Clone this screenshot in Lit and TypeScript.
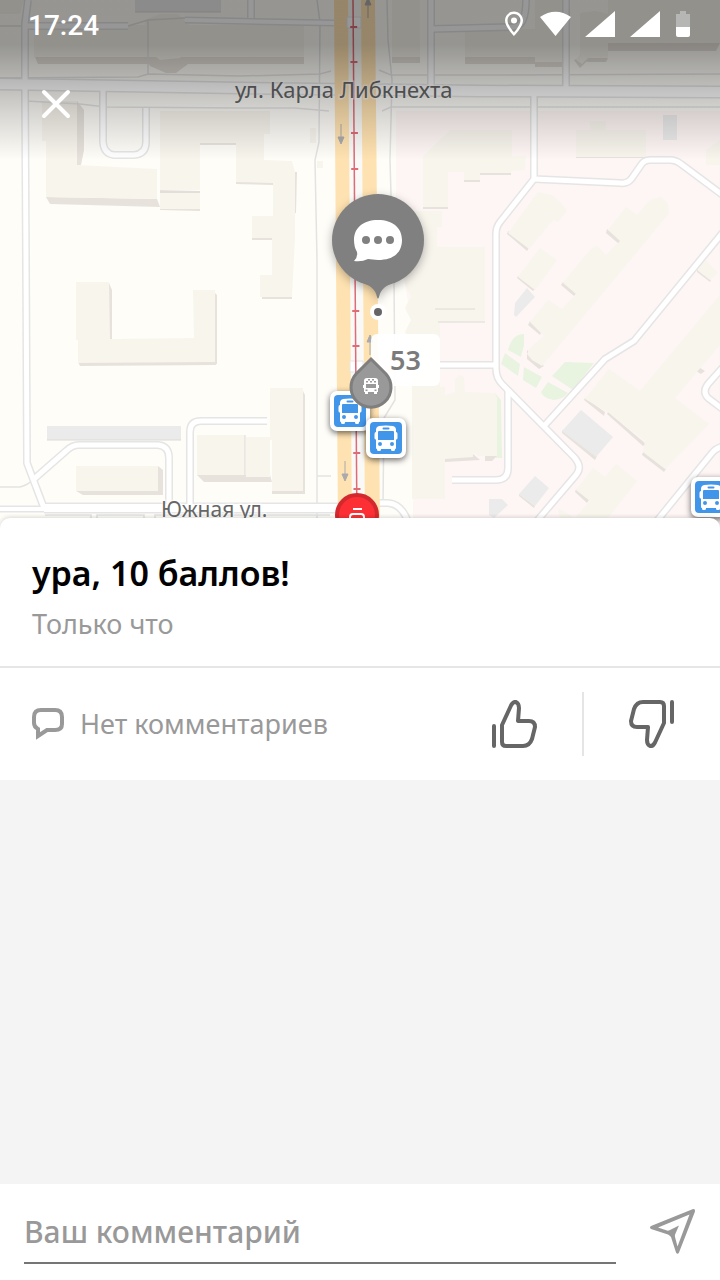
import { LitElement, html, svg, css } from "lit";
import { customElement, state } from "lit/decorators.js";

const ROADS: Array<[string, number]> = [
  ["M0 84 L240 88 L480 91 L720 92", 10],
  ["M28 0 L25 24 L25 84", 5],
  ["M25 88 L26 260 L27 463 L44 508", 5],
  ["M25 26 H128", 5],
  ["M185 20 L334 23", 4],
  ["M251 0 V18", 5],
  ["M431 0 V88", 5],
  ["M431 29 L514 27 Q526 26 526 0", 5],
  ["M566 0 V90", 5],
  ["M103 90 V142 Q104 154 114 155 H134 Q146 154 146 142 V108", 5],
  ["M34 479 L66 451 Q72 445 79 445 H158 Q169 446 169 458 V506", 5],
  ["M190 506 V432 Q190 421 201 421 H267", 5],
  ["M0 509 H44", 4],
  ["M44 508 H340", 8],
  ["M534 94 V179", 5],
  ["M534 179 L620 183 Q628 184 632 178 L641 165 Q644 160 650 160 H670 Q676 160 681 164 L724 196", 5],
  ["M534 179 L500 222 Q496 227 496 234 V368 Q496 378 502 384 L574 457 Q583 467 576 475 L536 522", 5],
  ["M440 365 H496", 5],
  ["M508 390 V468 Q508 480 496 480 H452", 5],
  ["M545 425 L605 359 L634 341 L724 231", 5],
  ["M724 366 L708 384 Q702 392 708 398 L724 410", 5],
  ["M656 522 L712 453 Q716 448 724 446", 5],
  ["M376 503 H388 Q402 504 408 522", 5],
];

const FOOTPATHS = [
  "M26 101 L80 104 L106 107 L240 108 H295 L329 111",
  "M0 78 L138 77 L148 74 L240 76 L320 74 L331 71",
  "M379 70 L391 75 H480 L720 74",
  "M382 111 L391 107 H720",
  "M0 26 H25", "M128 26 L148 20 V75 M148 20 L185 18",
  "M317 0 L320 22 L319 142 L315 160 L317 260 V518",
  "M387 0 L388 40 L392 80 L390 160 L391 195 L394 280 L395 400 L384 418 L383 502",
  "M317 476 H331", "M0 487 H20 Q28 485 34 479",
  "M45 515 H91 V520 M97 520 V515 H144 V520 M155 520 V515 H330",
];

const SHADES = [
  "35,57 304,57 304,64 38,64", "190,26 193,32 192,48 190,55", "142,50 190,50 188,64 176,73 166,73 150,66",
  "392,57 420,57 420,63 392,63", "465,57 535,57 535,64 465,64", "535,60 565,60 565,67 535,67",
  "574,60 584,56 588,60 580,68", "580,58 608,58 606,62 588,62", "608,43 720,43 716,51 608,51",
  "46,197 157,199 160,207 50,204", "77,101 84,110 84,150 81,165 76,165",
  "160,190 200,191 200,211 160,210", "200,142 236,142 236,145 200,145", "236,181 273,182 273,185 236,184",
  "252,237 272,237 272,240 252,240", "262,296 292,296 292,299 262,299", "293,172 297,172 296,213 293,213",
  "109,283 112,290 112,340 109,340", "213,291 217,295 217,364 213,364", "78,362 217,361 216,365 80,366",
  "76,491 158,491 158,466 163,470 163,495 83,495", "197,475 270,475 272,482 204,482", "272,490 305,490 305,494 272,494", "302,389 305,395 305,493 302,493",
  "423,206 448,206 448,209 423,209", "464,180 480,180 480,182 464,182", "480,173 511,173 511,175 480,175",
  "576,156 646,156 646,158 576,158", "508,231 529,248 527,251 507,234", "607,229 622,240 619,244 606,233",
  "563,282 577,293 574,296 561,285", "530,321 542,331 540,335 528,325", "527,350 544,366 539,369 527,359",
  "518,276 535,289 533,291 517,278", "445,457 473,457 473,454 480,460 445,462", "485,456 497,456 492,461 485,461",
  "640,391 661,406 658,410 638,394", "697,366 705,371 701,374 694,370", "585,398 605,412 604,416 584,400",
  "608,412 646,444 643,446 607,414", "643,452 666,469 664,472 642,455", "576,489 589,500 587,503 575,492",
  "562,430 597,456 595,460 562,433", "519,494 535,506 534,508 519,496", "697,269 711,280 710,282 697,272",
];

const BUILDINGS = [
  "34,25 304,25 304,57 34,57", "145,20 160,14 178,14 190,26 190,48 180,58 160,60 145,48",
  "0,0 24,0 20,14 0,14", "392,0 420,0 420,57 392,57", "465,29 535,29 535,57 465,57", "535,0 565,0 565,62 535,62",
  "580,13 595,11 608,14 608,58 588,58 582,64 576,60 580,54", "608,0 720,0 720,43 608,43",
  "42,101 77,101 77,165 157,169 157,199 46,197 46,141 42,141",
  "160,111 270,111 270,134 264,134 264,160 292,161 295,172 295,238 292,297 260,297 260,275 272,275 272,238 252,238 252,216 273,216 273,183 236,182 236,143 200,143 200,190 160,190",
  "160,193 200,193 200,209 160,209",
  "310,128 316,128 316,143 310,143", "317,161 323,161 323,168 317,168",
  "76,282 109,282 110,339 194,338 193,290 215,290 215,362 78,363 78,340 76,340",
  "76,466 158,466 158,491 76,491", "197,435 245,435 245,475 197,475", "246,437 270,437 270,477 246,477",
  "270,388 303,388 303,491 272,491 272,440 270,440",
  "423,156 450,130 512,130 512,156 526,156 525,170 511,171 511,173 480,173 480,180 464,180 464,172 448,172 448,207 423,207",
  "576,130 590,130 590,121 606,121 606,130 646,130 646,157 576,157", "706,150 720,140 720,165 706,165",
  "538,192 552,195 560,202 567,211 558,222 553,220 529,249 508,233",
  "626,207 637,215 650,200 660,197 668,203 669,213 632,258 542,366 532,360 527,354 530,348 544,336 530,322 548,300 562,309 576,294 563,283 580,262 593,247 597,246 606,255 620,241 608,230",
  "540,248 557,260 535,290 518,277",
  "412,211 442,211 442,227 437,227 437,247 485,247 485,321 440,323 440,387 445,387 445,499 412,499 412,340 405,332 411,320 405,308 411,296 405,284",
  "445,395 455,392 455,380 459,375 464,377 465,392 495,393 497,398 497,456 479,456 473,452 473,457 445,459",
  "609,369 640,391 720,295 720,345 702,366 675,398 709,424 665,469 643,452 645,441 608,412 585,399",
  "593,468 605,477 616,464 637,481 608,518 560,520 558,508 575,518 590,501 576,490",
  "706,260 718,273 710,280 697,270",
];

const GREY_BLOCKS = [
  "135,0 221,0 221,12 135,12", "47,426 181,426 181,440 47,440", "663,115 677,115 677,140 663,140",
  "527,288 535,297 516,317 514,315 515,303", "581,410 613,437 596,457 562,431",
  "535,476 549,488 535,506 519,494", "489,499 502,499 508,505 494,518 489,515",
];

const TICKS = [27, 62, 133, 169, 205, 311, 346, 453, 489];

const busStop = (x: number, y: number) => svg`
  <g transform="translate(${x} ${y})">
    <rect class="stop-plate" width="40" height="40" rx="7" />
    <rect x="4" y="4" width="32" height="32" rx="4" fill="#4296e9" />
    <path fill="#fff" fill-rule="evenodd" d="M13 8 Q20 7 27 8 Q29.500 8.500 30 11 V14 Q31.500 14 31.500 16 V20 Q31.500 21.500 30 21.500 V30 Q30 31 29 31 V31.500 Q29 33 27.500 33 H26.500 Q25 33 25 31.500 V31 H15 V31.500 Q15 33 13.500 33 H12.500 Q11 33 11 31.500 V31 Q10 31 10 30 V21.500 Q8.500 21.500 8.500 20 V16 Q8.500 14 10 14 V11 Q10.500 8.500 13 8 Z M17.500 9.500 Q16.500 9.500 16.500 10.500 T17.500 11.500 H22.500 Q23.500 11.500 23.500 10.500 T22.500 9.500 Z M13 13 Q12 13 12 14 V22 H28 V14 Q28 13 27 13 Z M14 24 A2 2 0 1 0 14 28 A2 2 0 1 0 14 24 Z M26 24 A2 2 0 1 0 26 28 A2 2 0 1 0 26 24 Z" />
  </g>`;

const directionArrow = (x: number, y: number, up: boolean) => svg`
  <path transform="translate(${x} ${y}) rotate(${up ? 180 : 0})" d="M0 -10 V4 M-3 3 L0 10 L3 3 Z" fill="#aaaaad" stroke="#aaaaad" />`;

@customElement("city-map")
class CityMap extends LitElement {
  static styles = css`
    :host { display: block; overflow: hidden; background: #fefdf8; }
    .canvas { display: block; width: 100%; height: 100%; }
    .casing { fill: none; stroke: #e5e5e6; stroke-linejoin: round; }
    .surface { fill: none; stroke: #fff; stroke-linejoin: round; }
    .footpath { fill: none; stroke: #e3e3e3; stroke-width: 1.5; }
    .building { fill: #f8f5ed; }
    .shade { fill: #e7e2dc; }
    .grey { fill: #ebebec; }
    .green { fill: #e8f4e0; }
    .street { font-family: "Noto Sans", sans-serif; font-size: 21px; fill: #666; stroke: #fff; stroke-opacity: 0.5; stroke-width: 3px; paint-order: stroke; }
    .avenue { font-size: 22px; }
    .route { font-family: "Noto Sans", sans-serif; font-size: 27px; font-weight: 600; fill: #7b7b7b; }
    .stop-plate { fill: #fff; filter: drop-shadow(0 2px 3px rgba(0, 0, 0, 0.6)); }
    .balloon { fill: #808080; filter: drop-shadow(0 3px 5px rgba(0, 0, 0, 0.3)); }
  `;

  render() {
    return html`
      <svg class="canvas" viewBox="0 0 720 528" preserveAspectRatio="xMidYMin slice" role="img" aria-label="Карта">
        <defs>
          <linearGradient id="scrim" x1="0" y1="0" x2="0" y2="1">
            <stop offset="0" stop-opacity="0.41" />
            <stop offset="0.28" stop-opacity="0.41" />
            <stop offset="0.5" stop-opacity="0.28" />
            <stop offset="0.7" stop-opacity="0.16" />
            <stop offset="1" stop-opacity="0" />
          </linearGradient>
        </defs>
        <rect width="720" height="528" fill="#fefdf8" />
        <path d="M396 111 H720 V528 H413 V330 L404 280 L396 200 Z" fill="#fef6f5" />
        <g>
          <path class="green" d="M508 350 Q512 334 524 334 L524 345 L521 357 Z M505 353 L520 364 L518 376 L501 364 Z M524 367 L542 377 L536 388 L523 380 Z M565 362 L594 363 L573 390 L552 376 Z M548 382 L568 393 Q562 400 553 400 Q543 398 541 392 Z M495 393 L501 400 L502 458 H496 Z" />
          ${SHADES.map((p) => svg`<polygon class="shade" points=${p} />`)}
          ${BUILDINGS.map((p) => svg`<polygon class="building" points=${p} />`)}
          ${GREY_BLOCKS.map((p) => svg`<polygon class="grey" points=${p} />`)}
          <path d="M47 440 H181 M135 12 H221 M160 192 H200 M245 435 V475 M435 309 H475 M438 322 H485" stroke="#dedbd7" fill="none" />
        </g>
        ${FOOTPATHS.map((d) => svg`<path class="footpath" d=${d} />`)}
        ${ROADS.map(([d, w]) => svg`<path class="casing" d=${d} stroke-width=${w + 3} />`)}
        ${ROADS.map(([d, w]) => svg`<path class="surface" d=${d} stroke-width=${w} />`)}

        <path d="M347 0 H361 L365 528 H352 Z" fill="#f9f9f7" />
        <path d="M334 0 H348 L352 528 H338 Z M361 0 H375 L380 528 H365 Z" fill="#ffe2b1" />
        <path d="M347 17 H361 V28 H347 Z M350 361 H363 V372 H350 Z" fill="#fff" stroke="#e6e6e6" />
        <path d="M353 0 L357 528" stroke="#de6b75" stroke-width="1.5" />
        ${TICKS.map((y) => svg`<path d="M${350 + y / 140} ${y} h7" stroke="#de6b75" stroke-width="2" />`)}
        ${directionArrow(368, 8, true)} ${directionArrow(341, 134, false)}
        ${directionArrow(370, 345, true)} ${directionArrow(345, 471, false)}

        <text class="street avenue" x="235" y="98">ул. Карла Либкнехта</text>
        <text class="street" x="161" y="517">Южная ул.</text>

        <circle cx="357" cy="515" r="20" fill="#fc3034" stroke="#d2292e" stroke-width="4" />
        <path d="M353 509 H362 M350 520 V517 Q350 514 353 514 H361 Q364 514 364 517 V520" fill="none" stroke="#fff" stroke-width="2" />

        ${busStop(330, 391)} ${busStop(366, 418)} ${busStop(691, 477)}

        <rect x="371" y="334" width="69" height="52" rx="6" fill="#fff" fill-opacity="0.92" />
        <text class="route" x="390" y="370">53</text>
        <path d="M371 359 L386 374 A20 20 0 1 1 356 374 Z" fill="#999" stroke="#7f7f7f" stroke-width="3" />
        <path fill="#fff" fill-rule="evenodd" d="M367 378 H375 Q378 378 378 381 V385 H379 V388 H378 V392 H377 V394 H374 V392 H368 V394 H365 V392 H364 V388 H363 V385 H364 V381 Q364 378 367 378 Z M366 384 V388 H376 V384 Z M366 381 V382.500 H368 V381 Z M370 381 V382.500 H372 V381 Z M374 381 V382.500 H376 V381 Z M368 379 V380.500 H370 V379 Z M372 379 V380.500 H374 V379 Z M365.500 389.500 V391 H367.500 V389.500 Z M374.500 389.500 V391 H376.500 V389.500 Z" />

        <g class="balloon">
          <circle cx="378" cy="240" r="46" />
          <path d="M360 282 Q375 286 377 297 Q378 300 379 297 Q381 286 396 282 Z" />
        </g>
        <path d="M378 220 C393 220 402 228 402 240 C402 253 393 260 378 260 C374 260 371 259 368 259 Q362 262 354 261 Q358 257 357 252 Q354 247 354 240 C354 228 363 220 378 220 Z" fill="#fff" />
        <g fill="#808080"><circle cx="366" cy="240" r="4" /><circle cx="378" cy="240" r="4" /><circle cx="390" cy="240" r="4" /></g>
        <circle cx="378" cy="312" r="8" fill="#fff" /><circle cx="378" cy="312" r="4" fill="#666" />
        <rect width="720" height="160" fill="url(#scrim)" />
      </svg>`;
  }
}

@customElement("status-bar")
class StatusBar extends LitElement {
  static styles = css`
    :host { display: flex; align-items: center; justify-content: space-between; height: 48px; padding: 0 28px; color: #fff; }
    .time { font: 500 28px/32px Roboto, sans-serif; padding-top: 4px; }
    .icons { display: block; width: 188px; height: 28px; }
  `;
  render() {
    return html`
      <time class="time">17:24</time>
      <svg class="icons" viewBox="504 10 188 28" fill="#fff" aria-hidden="true">
        <path fill-rule="evenodd" d="M514 11.500 C519 11.500 523 15.500 523 20.500 C523 27 514 36 514 36 C514 36 505 27 505 20.500 C505 15.500 509 11.500 514 11.500 Z M514 14 C510 14 507.500 17 507.500 20.500 C507.500 25 514 32.500 514 32.500 C514 32.500 520.500 25 520.500 20.500 C520.500 17 518 14 514 14 Z" />
        <circle cx="514" cy="20.500" r="3" />
        <path d="M540 17 Q555.500 6.500 571 17 L555.500 36 Z M615 11 V37 H585 Z M660 11 V37 H630 Z" />
        <path d="M676 14 H680 V11 H686 V14 H690 V27 H676 Z" fill="#b6b6b4" />
        <path d="M676 27 H690 V35 Q690 37 688 37 H678 Q676 37 676 35 Z" />
      </svg>`;
  }
}

@customElement("app-root")
class AppRoot extends LitElement {
  @state() private draft = "";

  static styles = css`
    :host { display: flex; flex-direction: column; min-height: 100vh; background: #f4f4f4; font-family: "Noto Sans", sans-serif; color: #000; }
    * { box-sizing: border-box; }
    button { display: flex; margin: 0; padding: 0; border: 0; background: none; color: inherit; cursor: pointer; }
    .hero { display: grid; }
    .map, .overlay { grid-area: 1 / 1; }
    .map { height: 528px; }
    .overlay { z-index: 1; align-self: start; }
    .close { margin: 28px 0 0 28px; padding: 12px; color: #fff; }
    .card { z-index: 1; margin-top: -10px; border-radius: 10px 10px 0 0; background: #fff; box-shadow: 0 -1px 4px rgba(0, 0, 0, 0.15); clip-path: inset(-4px 0 0 0); }
    .message { padding: 32px 32px 24px; border-bottom: 2px solid #e6e6e6; }
    .title { margin: 0; font-size: 34px; line-height: 46px; font-weight: 600; }
    .age { margin: 10px 0 0; font-size: 27px; line-height: 36px; color: #999; }
    .actions { display: flex; align-items: center; height: 112px; padding: 0 44px 0 32px; color: #666; }
    .comments { display: flex; flex: 1; align-items: center; gap: 16px; font-size: 27px; line-height: 36px; color: #999; }
    .rule { width: 2px; height: 64px; margin: 0 44px; background: #e5e5e5; }
    .flipped { transform: rotate(180deg); }
    .feed { flex: 1; }
    .composer { display: flex; align-items: center; gap: 32px; height: 96px; padding: 0 24px; background: #fff; color: #999; }
    .field { flex: 1; min-width: 0; height: 64px; padding: 0; border: 0; border-bottom: 2px solid #757575; border-radius: 0; outline: 0; background: none; font: 500 30px/40px "Noto Sans", sans-serif; color: #000; }
    .field::placeholder { color: #999; opacity: 1; }
  `;

  render() {
    return html`
      <header class="hero">
        <city-map class="map"></city-map>
        <div class="overlay">
          <status-bar></status-bar>
          <button class="close" aria-label="Закрыть">
            <svg width="32" height="32" viewBox="0 0 32 32" fill="none" stroke="currentColor" stroke-width="4" stroke-linecap="round"><path d="M4 4 L28 28 M28 4 L4 28" /></svg>
          </button>
        </div>
      </header>
      <main class="card">
        <div class="message">
          <h1 class="title">ура, 10 баллов!</h1>
          <p class="age">Только что</p>
        </div>
        <div class="actions">
          <div class="comments">
            <svg width="32" height="32" viewBox="0 0 32 32" fill="none" stroke="currentColor" stroke-width="4"><path d="M9 2 H23 Q30 2 30 9 V16 Q30 22 23 22 H15 L6 28 V21 Q2 19 2 15 V9 Q2 2 9 2 Z" /></svg>
            <span>Нет комментариев</span>
          </div>
          <button aria-label="Нравится">${this.thumb()}</button>
          <div class="rule"></div>
          <button class="flipped" aria-label="Не нравится">${this.thumb()}</button>
        </div>
      </main>
      <div class="feed"></div>
      <form class="composer" @submit=${(e: Event) => e.preventDefault()}>
        <input class="field" type="text" aria-label="Ваш комментарий" placeholder="Ваш комментарий" .value=${this.draft} @input=${(e: Event) => (this.draft = (e.target as HTMLInputElement).value)} />
        <button aria-label="Отправить">
          <svg width="48" height="48" viewBox="0 0 48 48" fill="currentColor"><path fill-rule="evenodd" d="M44.500 1.200 Q47.500 0.500 47 3.500 L31 44.500 Q29.500 47 28 44.500 L23 29 Q22 27.500 20 26.500 L3 21 Q1 19.500 3 18 Z M41.500 6.500 L10 19.500 L19 22.500 Q21 23 23 21.500 L31 17.500 L27.500 25.500 Q26.500 27 27 29 L29.500 38.500 Z" /></svg>
        </button>
      </form>`;
  }

  private thumb() {
    return html`<svg width="48" height="48" viewBox="0 0 48 48" fill="none" stroke="currentColor" stroke-width="4" stroke-linecap="round" stroke-linejoin="round">
      <path d="M4 26 V46 M12 25 L21 5.500 Q23 1.500 26 2 Q29 3.500 29 8 L28 21 H39 Q45 21 45 27 L42 39 Q39.500 46 33 46 H16 Q12 46 12 42 Z" />
    </svg>`;
  }
}
